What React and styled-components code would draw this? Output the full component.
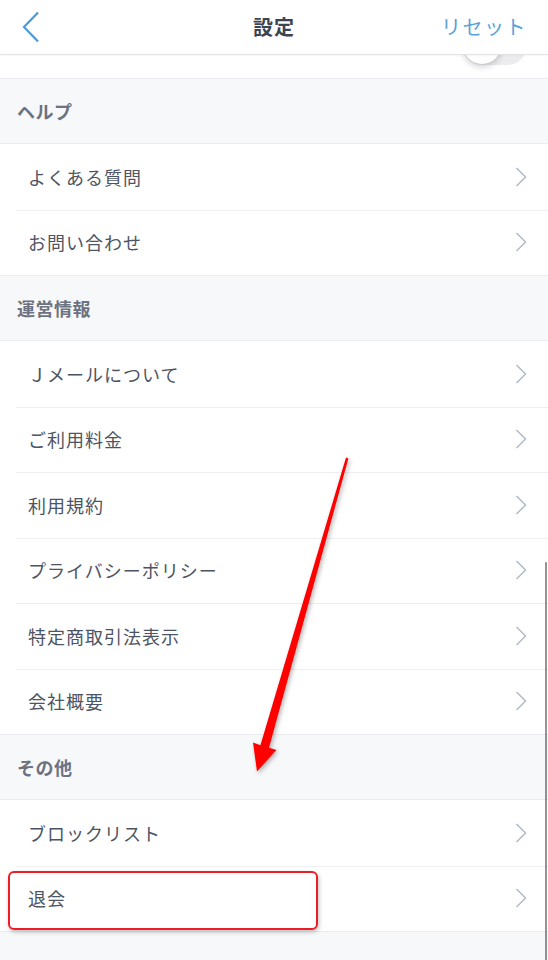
import React from 'react';
import styled, { createGlobalStyle } from 'styled-components';

const GlobalStyle = createGlobalStyle`
  html, body {
    margin: 0;
    padding: 0;
    background: #f7f8fa;
  }
  body {
    font-family: "Noto Sans CJK JP", "Noto Sans", "Liberation Sans", sans-serif;
    -webkit-font-smoothing: antialiased;
  }
`;

const Screen = styled.div`
  position: relative;
  width: 548px;
  height: 960px;
  overflow: hidden;
  background: #f7f8fa;
`;

const NavBar = styled.header`
  display: grid;
  grid-template-columns: 1fr auto 1fr;
  align-items: center;
  height: 54px;
  padding: 0 22px;
  background: #fff;
  border-bottom: 1px solid #e2e3e6;
  box-shadow: 0 1px 2px rgba(0, 0, 0, 0.04);
  position: relative;
  z-index: 2;
`;

const BackButton = styled.button`
  justify-self: start;
  display: flex;
  align-items: center;
  padding: 0;
  margin: 0 0 1px 0;
  border: 0;
  background: none;
`;

const Title = styled.h1`
  margin: 0 0 2px 0;
  font-size: 20px;
  font-weight: 700;
  color: #3b4452;
  letter-spacing: 1px;
`;

const ResetLink = styled.span`
  justify-self: end;
  margin: 0 -1px 2px 0;
  font-size: 20px;
  font-weight: 400;
  color: #5ba2da;
  letter-spacing: 1.5px;
`;

const PartialRow = styled.div`
  display: flex;
  justify-content: flex-end;
  align-items: flex-end;
  height: 23px;
  padding-right: 21px;
  background: #fff;
  overflow: hidden;
`;

const Toggle = styled.div`
  position: relative;
  width: 65px;
  height: 40px;
  margin-bottom: 13px;
  border-radius: 20px;
  background: #ececee;

  &::after {
    content: '';
    position: absolute;
    left: 1px;
    top: 1px;
    width: 38px;
    height: 38px;
    border-radius: 50%;
    background: #fff;
    box-shadow: 0 3px 6px rgba(0, 0, 0, 0.18);
  }
`;

const SectionHeader = styled.div`
  display: flex;
  align-items: center;
  box-sizing: border-box;
  height: 66px;
  padding-left: 17px;
  background: #f7f8fa;
  border-top: 1px solid #ebecef;
  border-bottom: 1px solid #ebecef;
  font-size: 18px;
  font-weight: 700;
  color: #6c7280;
  letter-spacing: 0.5px;
`;

const Row = styled.div`
  position: relative;
  display: flex;
  align-items: center;
  justify-content: space-between;
  box-sizing: border-box;
  height: 65.5px;
  padding: 0 21px 0 28px;
  background: #fff;
  font-size: 18px;
  color: #4d5463;
  letter-spacing: 1px;

  & + &::before {
    content: '';
    position: absolute;
    top: 0;
    left: 16px;
    right: 0;
    border-top: 1px solid #eeeff2;
  }
`;

const Footer = styled.div`
  border-top: 1px solid #ebecef;
  height: 40px;
`;

const Highlight = styled.div`
  position: absolute;
  left: 8px;
  top: 871px;
  width: 306px;
  height: 55px;
  border: 2px solid #ee1c24;
  border-radius: 6px;
  box-shadow: 1px 2px 4px rgba(0, 0, 0, 0.25);
  pointer-events: none;
`;

const ArrowLayer = styled.svg`
  position: absolute;
  left: 0;
  top: 0;
  pointer-events: none;
`;

const ScrollThumb = styled.div`
  position: absolute;
  right: 1px;
  top: 562px;
  width: 2.5px;
  height: 400px;
  border-radius: 2px;
  background: rgba(60, 60, 60, 0.55);
`;

const Chevron = () => (
  <svg width="12" height="20" viewBox="0 0 12 20" fill="none">
    <path d="M1.5 1 L10.5 10 L1.5 19" stroke="#b3bac8" strokeWidth="1.5" />
  </svg>
);

const sections = [
  { title: 'ヘルプ', items: ['よくある質問', 'お問い合わせ'] },
  {
    title: '運営情報',
    items: ['Ｊメールについて', 'ご利用料金', '利用規約', 'プライバシーポリシー', '特定商取引法表示', '会社概要'],
  },
  { title: 'その他', items: ['ブロックリスト', '退会'] },
];

export default function App() {
  return (
    <Screen>
      <GlobalStyle />
      <NavBar>
        <BackButton aria-label="戻る">
          <svg width="18" height="32" viewBox="0 0 18 32" fill="none">
            <path d="M16 1.5 L2 16 L16 30.5" stroke="#4a9ad8" strokeWidth="2.2" />
          </svg>
        </BackButton>
        <Title>設定</Title>
        <ResetLink>リセット</ResetLink>
      </NavBar>

      <PartialRow>
        <Toggle />
      </PartialRow>

      {sections.map(section => (
        <React.Fragment key={section.title}>
          <SectionHeader>{section.title}</SectionHeader>
          {section.items.map(item => (
            <Row key={item}>
              <span>{item}</span>
              <Chevron />
            </Row>
          ))}
        </React.Fragment>
      ))}
      <Footer />

      <Highlight />
      <ArrowLayer width="548" height="960" viewBox="0 0 548 960">
        <defs>
          <filter id="arrowShadow" x="-20%" y="-20%" width="140%" height="140%">
            <feDropShadow dx="1.5" dy="2" stdDeviation="2" floodColor="#000" floodOpacity="0.3" />
          </filter>
        </defs>
        <polygon
          points="346,457.6 348.4,458.4 269,747.8 276.5,750 257,771.5 253,742.5 260.4,745.2"
          fill="#fe0000"
          filter="url(#arrowShadow)"
        />
      </ArrowLayer>
      <ScrollThumb />
    </Screen>
  );
}
